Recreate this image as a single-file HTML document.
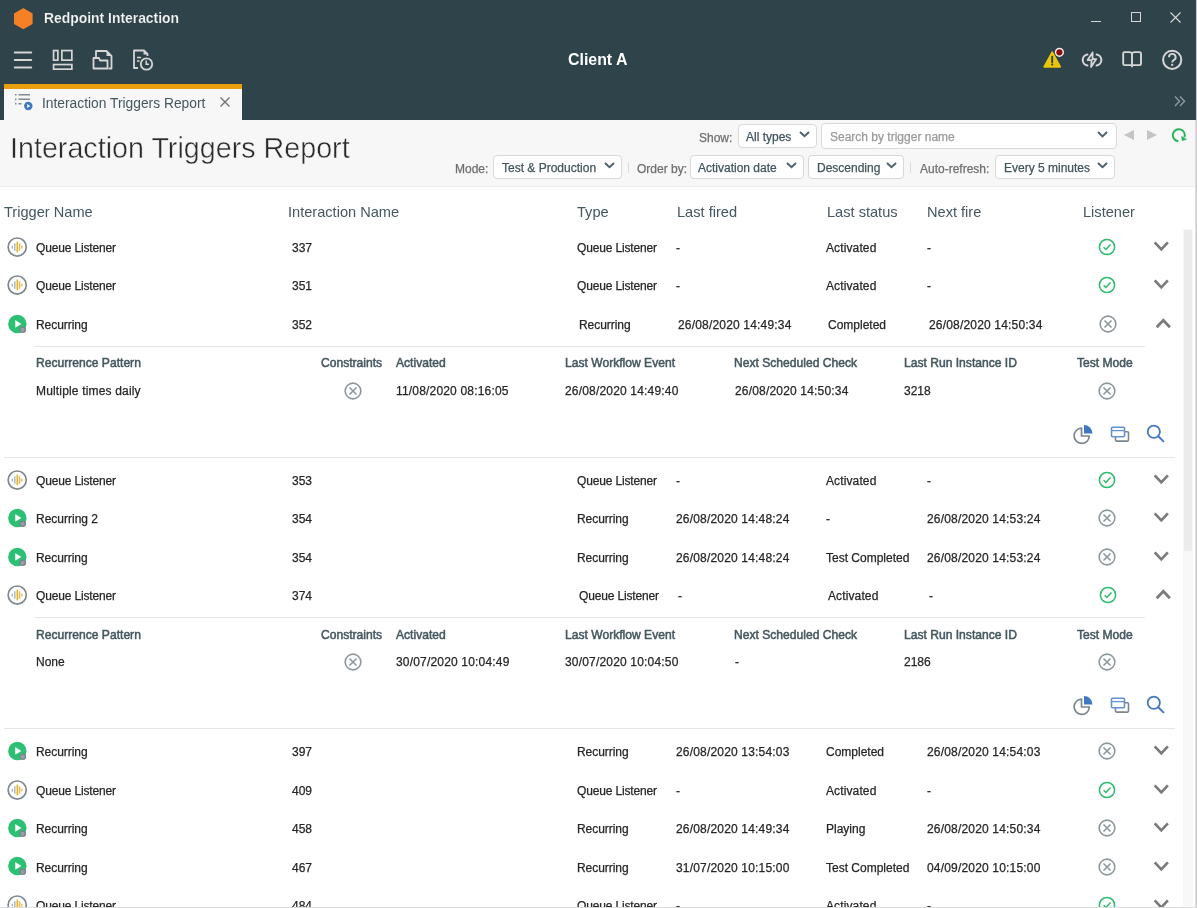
<!DOCTYPE html><html><head><meta charset="utf-8"><style>
html,body{margin:0;padding:0}
body{width:1197px;height:908px;overflow:hidden;position:relative;background:#fff;font-family:'Liberation Sans', sans-serif}
.t{position:absolute;white-space:nowrap;font-family:'Liberation Sans', sans-serif;will-change:transform}
svg{overflow:visible}
</style></head><body>
<div style="position:absolute;left:0px;top:0px;width:1197px;height:120px;background:#2f434b"></div>
<svg style="position:absolute;left:13px;top:7px" width="21" height="23" viewBox="0 0 21 23"><polygon points="10.3,2 18.8,6.85 18.8,16.45 10.3,21.3 1.8,16.45 1.8,6.85" fill="#f58025" stroke="#f58025" stroke-width="1.6" stroke-linejoin="round"/></svg>
<div class="t" style="left:44px;top:12.32px;font-size:13.9px;line-height:13.9px;color:#f5f5f5;font-weight:700;-webkit-text-stroke:0.15px #2f434b;">Redpoint Interaction</div>
<div style="position:absolute;left:1091px;top:21px;width:10px;height:1px;background:#d8d8d8"></div>
<div style="position:absolute;left:1131px;top:12px;width:10px;height:10px;border:1px solid #d8d8d8;box-sizing:border-box"></div>
<svg style="position:absolute;left:1170px;top:12px" width="11" height="11" viewBox="0 0 11 11"><path d="M0.5 0.5L10.5 10.5M10.5 0.5L0.5 10.5" stroke="#d8d8d8" stroke-width="1.1"/></svg>
<svg style="position:absolute;left:13px;top:50px" width="20" height="20" viewBox="0 0 20 20"><path d="M1.8 2.5H18.2M1.8 10H18.2M1.8 17.4H18.2" stroke="#d6d6d6" stroke-width="2" stroke-linecap="round"/></svg>
<svg style="position:absolute;left:52px;top:49px" width="22" height="22" viewBox="0 0 22 22"><rect x="1.55" y="1.55" width="4.3" height="9.6" fill="none" stroke="#d6d6d6" stroke-width="1.7"/><rect x="9.85" y="1.55" width="10" height="9.6" fill="none" stroke="#d6d6d6" stroke-width="1.7"/><rect x="1.55" y="15.55" width="18.3" height="4.6" fill="none" stroke="#d6d6d6" stroke-width="1.7"/></svg>
<svg style="position:absolute;left:92px;top:49px" width="22" height="22" viewBox="0 0 22 22"><path d="M4 8V2H14.5L19.5 7V19.5H16.5" fill="none" stroke="#d6d6d6" stroke-width="1.8" stroke-linejoin="round"/><path d="M14.5 1.5V7H19.5Z" fill="#d6d6d6"/><path d="M1.5 9H7L8 11.5H15.5V19.5H1.5Z" fill="none" stroke="#d6d6d6" stroke-width="1.8" stroke-linejoin="round"/></svg>
<svg style="position:absolute;left:132px;top:49px" width="23" height="23" viewBox="0 0 23 23"><path d="M6 19H2V1.5H12L15.5 5V7" fill="none" stroke="#d6d6d6" stroke-width="1.8" stroke-linejoin="round"/><path d="M11.5 1.5V5.5H15.5Z" fill="#d6d6d6"/><path d="M5 8.5H9M5 12H7.5" stroke="#d6d6d6" stroke-width="1.6"/><circle cx="14.5" cy="15" r="5.7" fill="none" stroke="#d6d6d6" stroke-width="1.8"/><path d="M14.2 11.5V15.3H17" fill="none" stroke="#d6d6d6" stroke-width="1.5"/></svg>
<div class="t" style="left:568px;top:52.14px;font-size:15.9px;line-height:15.9px;color:#ffffff;font-weight:700;">Client A</div>
<svg style="position:absolute;left:1040px;top:44px" width="28" height="28" viewBox="0 0 28 28"><path d="M12.2 8.4L20 22.7H4.4Z" fill="#e8c60a" stroke="#e8c60a" stroke-width="2" stroke-linejoin="round"/><path d="M12.2 12.6V18.2" stroke="#2f434b" stroke-width="1.9" stroke-linecap="round"/><circle cx="12.2" cy="20.6" r="1.05" fill="#2f434b"/><circle cx="19.4" cy="8.3" r="3.85" fill="#8e0a0a" stroke="#f0f0f0" stroke-width="1.5"/></svg>
<svg style="position:absolute;left:1078px;top:46px" width="28" height="26" viewBox="0 0 28 26"><path d="M9.45 8.6A5.5 5.5 0 0 0 9.45 19.5M18.6 8.6A5.5 5.5 0 0 1 18.6 19.5" fill="none" stroke="#d6d6d6" stroke-width="2" stroke-linecap="round"/><path d="M14.6 6.5L9.6 14.1H13.6L13.1 21L18.2 13.1H14.6Z" fill="none" stroke="#d6d6d6" stroke-width="1.8" stroke-linejoin="round"/></svg>
<svg style="position:absolute;left:1118px;top:46px" width="28" height="26" viewBox="0 0 28 26"><path d="M14 7.4Q13.2 6.1 11.5 6.1H6.6Q5.2 6.1 5.2 7.5V17.7Q5.2 19.1 6.6 19.1H21.6Q23 19.1 23 17.7V7.5Q23 6.1 21.6 6.1H16.5Q14.8 6.1 14 7.4V19.1" fill="none" stroke="#d6d6d6" stroke-width="1.9" stroke-linejoin="round"/><path d="M12 19L14 21.7L16 19Z" fill="#d6d6d6"/></svg>
<svg style="position:absolute;left:1158px;top:46px" width="28" height="28" viewBox="0 0 28 28"><circle cx="14.2" cy="13.8" r="9.1" fill="none" stroke="#d6d6d6" stroke-width="2"/><path d="M11 11.2A3.3 3.3 0 1 1 15.6 14.2C14.6 14.8 14.2 15.2 14.2 16.6" fill="none" stroke="#d6d6d6" stroke-width="1.9" stroke-linecap="butt"/><rect x="13.2" y="17.8" width="2" height="2" fill="#d6d6d6"/></svg>
<div style="position:absolute;left:4px;top:84px;width:238px;height:36px;background:#f7f7f7"></div>
<div style="position:absolute;left:4px;top:84px;width:238px;height:5px;background:#e8a10b"></div>
<svg style="position:absolute;left:14px;top:93px" width="18" height="18" viewBox="0 0 18 18"><path d="M1 1.7H2.5M1 6.3H2.5M1 10.8H2.5" stroke="#808a8f" stroke-width="1.6"/><path d="M4.5 1.7H16M4.5 6.3H16M4.5 10.8H7.5" stroke="#808a8f" stroke-width="1.6"/><circle cx="14.3" cy="13" r="4.2" fill="#3e78c0"/><path d="M13.2 11L16.2 13L13.2 15Z" fill="#fff"/></svg>
<div class="t" style="left:42px;top:96.71px;font-size:13.8px;line-height:13.8px;color:#44575f;font-weight:400;">Interaction Triggers Report</div>
<svg style="position:absolute;left:220px;top:97px" width="10" height="10" viewBox="0 0 10 10"><path d="M0.5 0.5L9.5 9.5M9.5 0.5L0.5 9.5" stroke="#707070" stroke-width="1.3"/></svg>
<svg style="position:absolute;left:1174px;top:96px" width="12" height="11" viewBox="0 0 12 11"><path d="M1 0.5L5.5 5.3L1 10M6 0.5L10.5 5.3L6 10" fill="none" stroke="#8e9aa0" stroke-width="1.4"/></svg>
<div style="position:absolute;left:0px;top:120px;width:1197px;height:66px;background:#f7f7f7"></div>
<div style="position:absolute;left:0px;top:186px;width:1197px;height:1px;background:#efefef"></div>
<div class="t" style="left:10px;top:133.89px;font-size:28.7px;line-height:28.7px;color:#2b2b2b;font-weight:400;-webkit-text-stroke:0.45px #f7f7f7;">Interaction Triggers Report</div>
<div class="t" style="left:698.5px;top:131.52px;font-size:12px;line-height:12px;color:#6e6e6e;font-weight:400;-webkit-text-stroke:0.25px #6e6e6e;">Show:</div>
<div style="position:absolute;left:738px;top:124px;width:79px;height:24px;background:#fff;border:1px solid #d9d9d9;border-radius:4px;box-sizing:border-box"></div>
<div class="t" style="left:746px;top:131.02px;font-size:12px;line-height:12px;color:#41545d;font-weight:400;-webkit-text-stroke:0.25px #41545d;">All types</div>
<svg style="position:absolute;left:799px;top:131.2px" width="11" height="7" viewBox="0 0 11 7"><path d="M1 1L5.5 5.2L10 1" fill="none" stroke="#4f626b" stroke-width="2"/></svg>
<div style="position:absolute;left:821px;top:123px;width:296px;height:26px;background:#fff;border:1px solid #d9d9d9;border-radius:4px;box-sizing:border-box"></div>
<div class="t" style="left:829.5px;top:131.32px;font-size:12px;line-height:12px;color:#9a9a9a;font-weight:400;-webkit-text-stroke:0.25px #9a9a9a;">Search by trigger name</div>
<svg style="position:absolute;left:1097px;top:131px" width="11" height="7" viewBox="0 0 11 7"><path d="M1 1L5.5 5.5L10 1" fill="none" stroke="#4f626b" stroke-width="1.9"/></svg>
<svg style="position:absolute;left:1124px;top:130px" width="10" height="10" viewBox="0 0 10 10"><path d="M10 0V10L0 5Z" fill="#c4c4c4"/></svg>
<svg style="position:absolute;left:1146.5px;top:130px" width="10" height="10" viewBox="0 0 10 10"><path d="M0 0V10L10 5Z" fill="#c4c4c4"/></svg>
<svg style="position:absolute;left:1171px;top:128px" width="16" height="15" viewBox="0 0 16 15"><path d="M7.28 13.18A6 6 0 1 1 13.44 9.25" fill="none" stroke="#22b35e" stroke-width="1.9"/><path d="M10.6 8.4L11.2 12.6L15.4 11.4Z" fill="#22b35e" stroke="#22b35e" stroke-width="0.6" stroke-linejoin="round"/></svg>
<div class="t" style="left:454.5px;top:163.02px;font-size:12px;line-height:12px;color:#6e6e6e;font-weight:400;-webkit-text-stroke:0.25px #6e6e6e;">Mode:</div>
<div style="position:absolute;left:493px;top:155px;width:129px;height:24px;background:#fff;border:1px solid #d9d9d9;border-radius:4px;box-sizing:border-box"></div>
<div class="t" style="left:501.5px;top:162.02px;font-size:12px;line-height:12px;color:#41545d;font-weight:400;-webkit-text-stroke:0.25px #41545d;">Test &amp; Production</div>
<svg style="position:absolute;left:604px;top:162.2px" width="11" height="7" viewBox="0 0 11 7"><path d="M1 1L5.5 5.2L10 1" fill="none" stroke="#4f626b" stroke-width="2"/></svg>
<div style="position:absolute;left:628px;top:162px;width:1px;height:11px;background:#dcdcdc"></div>
<div class="t" style="left:637px;top:163.02px;font-size:12px;line-height:12px;color:#6e6e6e;font-weight:400;-webkit-text-stroke:0.25px #6e6e6e;">Order by:</div>
<div style="position:absolute;left:690px;top:155px;width:114px;height:24px;background:#fff;border:1px solid #d9d9d9;border-radius:4px;box-sizing:border-box"></div>
<div class="t" style="left:698px;top:162.02px;font-size:12px;line-height:12px;color:#41545d;font-weight:400;-webkit-text-stroke:0.25px #41545d;">Activation date</div>
<svg style="position:absolute;left:786px;top:162.2px" width="11" height="7" viewBox="0 0 11 7"><path d="M1 1L5.5 5.2L10 1" fill="none" stroke="#4f626b" stroke-width="2"/></svg>
<div style="position:absolute;left:808px;top:155px;width:96px;height:24px;background:#fff;border:1px solid #d9d9d9;border-radius:4px;box-sizing:border-box"></div>
<div class="t" style="left:816.5px;top:162.02px;font-size:12px;line-height:12px;color:#41545d;font-weight:400;-webkit-text-stroke:0.25px #41545d;">Descending</div>
<svg style="position:absolute;left:886px;top:162.2px" width="11" height="7" viewBox="0 0 11 7"><path d="M1 1L5.5 5.2L10 1" fill="none" stroke="#4f626b" stroke-width="2"/></svg>
<div style="position:absolute;left:910px;top:162px;width:1px;height:11px;background:#dcdcdc"></div>
<div class="t" style="left:919.5px;top:163.02px;font-size:12px;line-height:12px;color:#6e6e6e;font-weight:400;-webkit-text-stroke:0.25px #6e6e6e;">Auto-refresh:</div>
<div style="position:absolute;left:995px;top:155px;width:120px;height:24px;background:#fff;border:1px solid #d9d9d9;border-radius:4px;box-sizing:border-box"></div>
<div class="t" style="left:1003.5px;top:162.02px;font-size:12px;line-height:12px;color:#41545d;font-weight:400;-webkit-text-stroke:0.25px #41545d;">Every 5 minutes</div>
<svg style="position:absolute;left:1097px;top:162.2px" width="11" height="7" viewBox="0 0 11 7"><path d="M1 1L5.5 5.2L10 1" fill="none" stroke="#4f626b" stroke-width="2"/></svg>
<div class="t" style="left:3.8px;top:204.74px;font-size:14.6px;line-height:14.6px;color:#44575f;font-weight:400;">Trigger Name</div>
<div class="t" style="left:288.3px;top:204.74px;font-size:14.6px;line-height:14.6px;color:#44575f;font-weight:400;">Interaction Name</div>
<div class="t" style="left:577px;top:204.74px;font-size:14.6px;line-height:14.6px;color:#44575f;font-weight:400;">Type</div>
<div class="t" style="left:676.5px;top:204.74px;font-size:14.6px;line-height:14.6px;color:#44575f;font-weight:400;">Last fired</div>
<div class="t" style="left:827px;top:204.74px;font-size:14.6px;line-height:14.6px;color:#44575f;font-weight:400;">Last status</div>
<div class="t" style="left:927px;top:204.74px;font-size:14.6px;line-height:14.6px;color:#44575f;font-weight:400;">Next fire</div>
<div class="t" style="left:1082.5px;top:204.74px;font-size:14.6px;line-height:14.6px;color:#44575f;font-weight:400;">Listener</div>
<svg style="position:absolute;left:7px;top:237px" width="20" height="20" viewBox="0 0 20 20"><circle cx="10.2" cy="10.05" r="9.05" fill="#fff" stroke="#7d8890" stroke-width="1.7"/><path d="M5.3 8.7V11.5M7.8 6.3V13.7" stroke="#aab3b9" stroke-width="1.4"/><path d="M10.3 4.6V15.4" stroke="#eab12e" stroke-width="1.6"/><path d="M12.6 6.3V13.8" stroke="#edbb4e" stroke-width="1.5"/><path d="M14.8 8.7V11.5" stroke="#f0c66a" stroke-width="1.8"/></svg>
<div class="t" style="left:36px;top:241.92px;font-size:12px;line-height:12px;color:#262626;font-weight:400;letter-spacing:-0.15px;-webkit-text-stroke:0.25px #262626;">Queue Listener</div>
<div class="t" style="left:291.5px;top:241.92px;font-size:12px;line-height:12px;color:#262626;font-weight:400;-webkit-text-stroke:0.25px #262626;">337</div>
<div class="t" style="left:576.5px;top:241.92px;font-size:12px;line-height:12px;color:#262626;font-weight:400;letter-spacing:-0.15px;-webkit-text-stroke:0.25px #262626;">Queue Listener</div>
<div class="t" style="left:675.5px;top:241.92px;font-size:12px;line-height:12px;color:#262626;font-weight:400;-webkit-text-stroke:0.25px #262626;">-</div>
<div class="t" style="left:826px;top:241.92px;font-size:12px;line-height:12px;color:#262626;font-weight:400;letter-spacing:0.12px;-webkit-text-stroke:0.25px #262626;">Activated</div>
<div class="t" style="left:927px;top:241.92px;font-size:12px;line-height:12px;color:#262626;font-weight:400;-webkit-text-stroke:0.25px #262626;">-</div>
<svg style="position:absolute;left:1098.0px;top:238px" width="18" height="18" viewBox="0 0 18 18"><circle cx="9" cy="9" r="7.6" fill="none" stroke="#2dbb6e" stroke-width="1.5"/><path d="M5.6 9.3L7.9 11.5L12.5 6.5" fill="none" stroke="#2dbb6e" stroke-width="1.5"/></svg>
<svg style="position:absolute;left:1152.6px;top:241px" width="17" height="11" viewBox="0 0 17 11"><path d="M1.7 1.4L8.3 8.4L14.9 1.4" fill="none" stroke="#7a7a7a" stroke-width="2.7"/></svg>
<svg style="position:absolute;left:7px;top:275.45px" width="20" height="20" viewBox="0 0 20 20"><circle cx="10.2" cy="10.05" r="9.05" fill="#fff" stroke="#7d8890" stroke-width="1.7"/><path d="M5.3 8.7V11.5M7.8 6.3V13.7" stroke="#aab3b9" stroke-width="1.4"/><path d="M10.3 4.6V15.4" stroke="#eab12e" stroke-width="1.6"/><path d="M12.6 6.3V13.8" stroke="#edbb4e" stroke-width="1.5"/><path d="M14.8 8.7V11.5" stroke="#f0c66a" stroke-width="1.8"/></svg>
<div class="t" style="left:36px;top:280.37px;font-size:12px;line-height:12px;color:#262626;font-weight:400;letter-spacing:-0.15px;-webkit-text-stroke:0.25px #262626;">Queue Listener</div>
<div class="t" style="left:291.5px;top:280.37px;font-size:12px;line-height:12px;color:#262626;font-weight:400;-webkit-text-stroke:0.25px #262626;">351</div>
<div class="t" style="left:576.5px;top:280.37px;font-size:12px;line-height:12px;color:#262626;font-weight:400;letter-spacing:-0.15px;-webkit-text-stroke:0.25px #262626;">Queue Listener</div>
<div class="t" style="left:675.5px;top:280.37px;font-size:12px;line-height:12px;color:#262626;font-weight:400;-webkit-text-stroke:0.25px #262626;">-</div>
<div class="t" style="left:826px;top:280.37px;font-size:12px;line-height:12px;color:#262626;font-weight:400;letter-spacing:0.12px;-webkit-text-stroke:0.25px #262626;">Activated</div>
<div class="t" style="left:927px;top:280.37px;font-size:12px;line-height:12px;color:#262626;font-weight:400;-webkit-text-stroke:0.25px #262626;">-</div>
<svg style="position:absolute;left:1098.0px;top:276.45px" width="18" height="18" viewBox="0 0 18 18"><circle cx="9" cy="9" r="7.6" fill="none" stroke="#2dbb6e" stroke-width="1.5"/><path d="M5.6 9.3L7.9 11.5L12.5 6.5" fill="none" stroke="#2dbb6e" stroke-width="1.5"/></svg>
<svg style="position:absolute;left:1152.6px;top:279.45px" width="17" height="11" viewBox="0 0 17 11"><path d="M1.7 1.4L8.3 8.4L14.9 1.4" fill="none" stroke="#7a7a7a" stroke-width="2.7"/></svg>
<svg style="position:absolute;left:7px;top:313.65px" width="20" height="22" viewBox="0 0 20 22"><circle cx="10.35" cy="10" r="9.2" fill="#2dbf73"/><path d="M8.5 6.6L14 9.9L8.5 13.2Z" fill="#fff" stroke="#fff" stroke-width="0.5" stroke-linejoin="round"/><circle cx="15.8" cy="15.8" r="3.3" fill="#7b848c"/><circle cx="15.8" cy="15.8" r="1.8" fill="#a3abb1"/><path d="M15.8 14.7V15.9H16.8" fill="none" stroke="#7b848c" stroke-width="0.6"/></svg>
<div class="t" style="left:36px;top:318.82px;font-size:12px;line-height:12px;color:#262626;font-weight:400;letter-spacing:-0.05px;-webkit-text-stroke:0.25px #262626;">Recurring</div>
<div class="t" style="left:291.5px;top:318.82px;font-size:12px;line-height:12px;color:#262626;font-weight:400;-webkit-text-stroke:0.25px #262626;">352</div>
<div class="t" style="left:578.5px;top:318.82px;font-size:12px;line-height:12px;color:#262626;font-weight:400;letter-spacing:-0.05px;-webkit-text-stroke:0.25px #262626;">Recurring</div>
<div class="t" style="left:677.5px;top:318.82px;font-size:12px;line-height:12px;color:#262626;font-weight:400;letter-spacing:0.18px;-webkit-text-stroke:0.25px #262626;">26/08/2020 14:49:34</div>
<div class="t" style="left:828px;top:318.82px;font-size:12px;line-height:12px;color:#262626;font-weight:400;-webkit-text-stroke:0.25px #262626;">Completed</div>
<div class="t" style="left:929px;top:318.82px;font-size:12px;line-height:12px;color:#262626;font-weight:400;letter-spacing:0.18px;-webkit-text-stroke:0.25px #262626;">26/08/2020 14:50:34</div>
<svg style="position:absolute;left:1099.2px;top:314.9px" width="18" height="18" viewBox="0 0 18 18"><circle cx="9" cy="9" r="7.85" fill="none" stroke="#8d989e" stroke-width="1.6"/><path d="M5.5 5.5L12.5 12.5M12.5 5.5L5.5 12.5" stroke="#8d989e" stroke-width="1.6"/></svg>
<svg style="position:absolute;left:1154.6px;top:317.9px" width="17" height="11" viewBox="0 0 17 11"><path d="M1.7 9.2L8.3 2.2L14.9 9.2" fill="none" stroke="#7a7a7a" stroke-width="2.7"/></svg>
<div style="position:absolute;left:35px;top:345.9px;width:1110px;height:1px;background:#e6e6e6"></div>
<div class="t" style="left:36px;top:357.44px;font-size:12.1px;line-height:12.1px;color:#44575f;font-weight:400;-webkit-text-stroke:0.5px #44575f">Recurrence Pattern</div>
<div class="t" style="left:321px;top:357.44px;font-size:12.1px;line-height:12.1px;color:#44575f;font-weight:400;-webkit-text-stroke:0.5px #44575f">Constraints</div>
<div class="t" style="left:395.5px;top:357.44px;font-size:12.1px;line-height:12.1px;color:#44575f;font-weight:400;-webkit-text-stroke:0.5px #44575f">Activated</div>
<div class="t" style="left:565px;top:357.44px;font-size:12.1px;line-height:12.1px;color:#44575f;font-weight:400;-webkit-text-stroke:0.5px #44575f">Last Workflow Event</div>
<div class="t" style="left:734px;top:357.44px;font-size:12.1px;line-height:12.1px;color:#44575f;font-weight:400;-webkit-text-stroke:0.5px #44575f">Next Scheduled Check</div>
<div class="t" style="left:904px;top:357.44px;font-size:12.1px;line-height:12.1px;color:#44575f;font-weight:400;-webkit-text-stroke:0.5px #44575f">Last Run Instance ID</div>
<div class="t" style="left:1076.5px;top:357.44px;font-size:12.1px;line-height:12.1px;color:#44575f;font-weight:400;-webkit-text-stroke:0.5px #44575f">Test Mode</div>
<div class="t" style="left:36px;top:385.02px;font-size:12px;line-height:12px;color:#262626;font-weight:400;letter-spacing:0.17px;-webkit-text-stroke:0.25px #262626;">Multiple times daily</div>
<svg style="position:absolute;left:343.5px;top:381.59999999999997px" width="18" height="18" viewBox="0 0 18 18"><circle cx="9" cy="9" r="7.85" fill="none" stroke="#8d989e" stroke-width="1.6"/><path d="M5.5 5.5L12.5 12.5M12.5 5.5L5.5 12.5" stroke="#8d989e" stroke-width="1.6"/></svg>
<div class="t" style="left:395.5px;top:385.02px;font-size:12px;line-height:12px;color:#262626;font-weight:400;letter-spacing:0.18px;-webkit-text-stroke:0.25px #262626;">11/08/2020 08:16:05</div>
<div class="t" style="left:565px;top:385.02px;font-size:12px;line-height:12px;color:#262626;font-weight:400;letter-spacing:0.18px;-webkit-text-stroke:0.25px #262626;">26/08/2020 14:49:40</div>
<div class="t" style="left:734.5px;top:385.02px;font-size:12px;line-height:12px;color:#262626;font-weight:400;letter-spacing:0.18px;-webkit-text-stroke:0.25px #262626;">26/08/2020 14:50:34</div>
<div class="t" style="left:904px;top:385.02px;font-size:12px;line-height:12px;color:#262626;font-weight:400;-webkit-text-stroke:0.25px #262626;">3218</div>
<svg style="position:absolute;left:1097.5px;top:381.59999999999997px" width="18" height="18" viewBox="0 0 18 18"><circle cx="9" cy="9" r="7.85" fill="none" stroke="#8d989e" stroke-width="1.6"/><path d="M5.5 5.5L12.5 12.5M12.5 5.5L5.5 12.5" stroke="#8d989e" stroke-width="1.6"/></svg>
<svg style="position:absolute;left:1073px;top:424.09999999999997px" width="21" height="20" viewBox="0 0 21 20"><path d="M8.5 4.2A7.6 7.6 0 1 0 16.3 12H8.5Z" fill="none" stroke="#7b878e" stroke-width="1.7" stroke-linejoin="round"/><path d="M11 1V9.5H19.5A8.5 8.5 0 0 0 11 1Z" fill="#3f79c1"/></svg>
<svg style="position:absolute;left:1110px;top:425.09999999999997px" width="21" height="18" viewBox="0 0 21 18"><rect x="5.5" y="6.8" width="13" height="9.3" rx="1" fill="none" stroke="#7b878e" stroke-width="1.6"/><rect x="1.5" y="2.3" width="13" height="9.5" rx="1" fill="#fff" stroke="#6593ce" stroke-width="1.6"/><path d="M1.5 5.6H14.5" stroke="#6593ce" stroke-width="1.3"/></svg>
<svg style="position:absolute;left:1146px;top:424.09999999999997px" width="20" height="20" viewBox="0 0 20 20"><circle cx="7.8" cy="7.8" r="6.1" fill="none" stroke="#4479bf" stroke-width="1.8"/><path d="M12.3 12.3L17.4 17.4" stroke="#4479bf" stroke-width="2" stroke-linecap="round"/></svg>
<div style="position:absolute;left:4px;top:456.9px;width:1171px;height:1px;background:#e6e6e6"></div>
<svg style="position:absolute;left:7px;top:469.9px" width="20" height="20" viewBox="0 0 20 20"><circle cx="10.2" cy="10.05" r="9.05" fill="#fff" stroke="#7d8890" stroke-width="1.7"/><path d="M5.3 8.7V11.5M7.8 6.3V13.7" stroke="#aab3b9" stroke-width="1.4"/><path d="M10.3 4.6V15.4" stroke="#eab12e" stroke-width="1.6"/><path d="M12.6 6.3V13.8" stroke="#edbb4e" stroke-width="1.5"/><path d="M14.8 8.7V11.5" stroke="#f0c66a" stroke-width="1.8"/></svg>
<div class="t" style="left:36px;top:474.82px;font-size:12px;line-height:12px;color:#262626;font-weight:400;letter-spacing:-0.15px;-webkit-text-stroke:0.25px #262626;">Queue Listener</div>
<div class="t" style="left:291.5px;top:474.82px;font-size:12px;line-height:12px;color:#262626;font-weight:400;-webkit-text-stroke:0.25px #262626;">353</div>
<div class="t" style="left:576.5px;top:474.82px;font-size:12px;line-height:12px;color:#262626;font-weight:400;letter-spacing:-0.15px;-webkit-text-stroke:0.25px #262626;">Queue Listener</div>
<div class="t" style="left:675.5px;top:474.82px;font-size:12px;line-height:12px;color:#262626;font-weight:400;-webkit-text-stroke:0.25px #262626;">-</div>
<div class="t" style="left:826px;top:474.82px;font-size:12px;line-height:12px;color:#262626;font-weight:400;letter-spacing:0.12px;-webkit-text-stroke:0.25px #262626;">Activated</div>
<div class="t" style="left:927px;top:474.82px;font-size:12px;line-height:12px;color:#262626;font-weight:400;-webkit-text-stroke:0.25px #262626;">-</div>
<svg style="position:absolute;left:1098.0px;top:470.9px" width="18" height="18" viewBox="0 0 18 18"><circle cx="9" cy="9" r="7.6" fill="none" stroke="#2dbb6e" stroke-width="1.5"/><path d="M5.6 9.3L7.9 11.5L12.5 6.5" fill="none" stroke="#2dbb6e" stroke-width="1.5"/></svg>
<svg style="position:absolute;left:1152.6px;top:473.9px" width="17" height="11" viewBox="0 0 17 11"><path d="M1.7 1.4L8.3 8.4L14.9 1.4" fill="none" stroke="#7a7a7a" stroke-width="2.7"/></svg>
<svg style="position:absolute;left:7px;top:508.1px" width="20" height="22" viewBox="0 0 20 22"><circle cx="10.35" cy="10" r="9.2" fill="#2dbf73"/><path d="M8.5 6.6L14 9.9L8.5 13.2Z" fill="#fff" stroke="#fff" stroke-width="0.5" stroke-linejoin="round"/><circle cx="15.8" cy="15.8" r="3.3" fill="#7b848c"/><circle cx="15.8" cy="15.8" r="1.8" fill="#a3abb1"/><path d="M15.8 14.7V15.9H16.8" fill="none" stroke="#7b848c" stroke-width="0.6"/></svg>
<div class="t" style="left:36px;top:513.27px;font-size:12px;line-height:12px;color:#262626;font-weight:400;-webkit-text-stroke:0.25px #262626;">Recurring 2</div>
<div class="t" style="left:291.5px;top:513.27px;font-size:12px;line-height:12px;color:#262626;font-weight:400;-webkit-text-stroke:0.25px #262626;">354</div>
<div class="t" style="left:576.5px;top:513.27px;font-size:12px;line-height:12px;color:#262626;font-weight:400;letter-spacing:-0.05px;-webkit-text-stroke:0.25px #262626;">Recurring</div>
<div class="t" style="left:675.5px;top:513.27px;font-size:12px;line-height:12px;color:#262626;font-weight:400;letter-spacing:0.18px;-webkit-text-stroke:0.25px #262626;">26/08/2020 14:48:24</div>
<div class="t" style="left:826px;top:513.27px;font-size:12px;line-height:12px;color:#262626;font-weight:400;-webkit-text-stroke:0.25px #262626;">-</div>
<div class="t" style="left:927px;top:513.27px;font-size:12px;line-height:12px;color:#262626;font-weight:400;letter-spacing:0.18px;-webkit-text-stroke:0.25px #262626;">26/08/2020 14:53:24</div>
<svg style="position:absolute;left:1098.2px;top:509.35px" width="18" height="18" viewBox="0 0 18 18"><circle cx="9" cy="9" r="7.85" fill="none" stroke="#8d989e" stroke-width="1.6"/><path d="M5.5 5.5L12.5 12.5M12.5 5.5L5.5 12.5" stroke="#8d989e" stroke-width="1.6"/></svg>
<svg style="position:absolute;left:1152.6px;top:512.35px" width="17" height="11" viewBox="0 0 17 11"><path d="M1.7 1.4L8.3 8.4L14.9 1.4" fill="none" stroke="#7a7a7a" stroke-width="2.7"/></svg>
<svg style="position:absolute;left:7px;top:546.5500000000001px" width="20" height="22" viewBox="0 0 20 22"><circle cx="10.35" cy="10" r="9.2" fill="#2dbf73"/><path d="M8.5 6.6L14 9.9L8.5 13.2Z" fill="#fff" stroke="#fff" stroke-width="0.5" stroke-linejoin="round"/><circle cx="15.8" cy="15.8" r="3.3" fill="#7b848c"/><circle cx="15.8" cy="15.8" r="1.8" fill="#a3abb1"/><path d="M15.8 14.7V15.9H16.8" fill="none" stroke="#7b848c" stroke-width="0.6"/></svg>
<div class="t" style="left:36px;top:551.72px;font-size:12px;line-height:12px;color:#262626;font-weight:400;letter-spacing:-0.05px;-webkit-text-stroke:0.25px #262626;">Recurring</div>
<div class="t" style="left:291.5px;top:551.72px;font-size:12px;line-height:12px;color:#262626;font-weight:400;-webkit-text-stroke:0.25px #262626;">354</div>
<div class="t" style="left:576.5px;top:551.72px;font-size:12px;line-height:12px;color:#262626;font-weight:400;letter-spacing:-0.05px;-webkit-text-stroke:0.25px #262626;">Recurring</div>
<div class="t" style="left:675.5px;top:551.72px;font-size:12px;line-height:12px;color:#262626;font-weight:400;letter-spacing:0.18px;-webkit-text-stroke:0.25px #262626;">26/08/2020 14:48:24</div>
<div class="t" style="left:826px;top:551.72px;font-size:12px;line-height:12px;color:#262626;font-weight:400;-webkit-text-stroke:0.25px #262626;">Test Completed</div>
<div class="t" style="left:927px;top:551.72px;font-size:12px;line-height:12px;color:#262626;font-weight:400;letter-spacing:0.18px;-webkit-text-stroke:0.25px #262626;">26/08/2020 14:53:24</div>
<svg style="position:absolute;left:1098.2px;top:547.8000000000001px" width="18" height="18" viewBox="0 0 18 18"><circle cx="9" cy="9" r="7.85" fill="none" stroke="#8d989e" stroke-width="1.6"/><path d="M5.5 5.5L12.5 12.5M12.5 5.5L5.5 12.5" stroke="#8d989e" stroke-width="1.6"/></svg>
<svg style="position:absolute;left:1152.6px;top:550.8000000000001px" width="17" height="11" viewBox="0 0 17 11"><path d="M1.7 1.4L8.3 8.4L14.9 1.4" fill="none" stroke="#7a7a7a" stroke-width="2.7"/></svg>
<svg style="position:absolute;left:7px;top:585.2500000000001px" width="20" height="20" viewBox="0 0 20 20"><circle cx="10.2" cy="10.05" r="9.05" fill="#fff" stroke="#7d8890" stroke-width="1.7"/><path d="M5.3 8.7V11.5M7.8 6.3V13.7" stroke="#aab3b9" stroke-width="1.4"/><path d="M10.3 4.6V15.4" stroke="#eab12e" stroke-width="1.6"/><path d="M12.6 6.3V13.8" stroke="#edbb4e" stroke-width="1.5"/><path d="M14.8 8.7V11.5" stroke="#f0c66a" stroke-width="1.8"/></svg>
<div class="t" style="left:36px;top:590.17px;font-size:12px;line-height:12px;color:#262626;font-weight:400;letter-spacing:-0.15px;-webkit-text-stroke:0.25px #262626;">Queue Listener</div>
<div class="t" style="left:291.5px;top:590.17px;font-size:12px;line-height:12px;color:#262626;font-weight:400;-webkit-text-stroke:0.25px #262626;">374</div>
<div class="t" style="left:578.5px;top:590.17px;font-size:12px;line-height:12px;color:#262626;font-weight:400;letter-spacing:-0.15px;-webkit-text-stroke:0.25px #262626;">Queue Listener</div>
<div class="t" style="left:677.5px;top:590.17px;font-size:12px;line-height:12px;color:#262626;font-weight:400;-webkit-text-stroke:0.25px #262626;">-</div>
<div class="t" style="left:828px;top:590.17px;font-size:12px;line-height:12px;color:#262626;font-weight:400;letter-spacing:0.12px;-webkit-text-stroke:0.25px #262626;">Activated</div>
<div class="t" style="left:929px;top:590.17px;font-size:12px;line-height:12px;color:#262626;font-weight:400;-webkit-text-stroke:0.25px #262626;">-</div>
<svg style="position:absolute;left:1099.0px;top:586.2500000000001px" width="18" height="18" viewBox="0 0 18 18"><circle cx="9" cy="9" r="7.6" fill="none" stroke="#2dbb6e" stroke-width="1.5"/><path d="M5.6 9.3L7.9 11.5L12.5 6.5" fill="none" stroke="#2dbb6e" stroke-width="1.5"/></svg>
<svg style="position:absolute;left:1154.6px;top:589.2500000000001px" width="17" height="11" viewBox="0 0 17 11"><path d="M1.7 9.2L8.3 2.2L14.9 9.2" fill="none" stroke="#7a7a7a" stroke-width="2.7"/></svg>
<div style="position:absolute;left:35px;top:617.2500000000001px;width:1110px;height:1px;background:#e6e6e6"></div>
<div class="t" style="left:36px;top:628.79px;font-size:12.1px;line-height:12.1px;color:#44575f;font-weight:400;-webkit-text-stroke:0.5px #44575f">Recurrence Pattern</div>
<div class="t" style="left:321px;top:628.79px;font-size:12.1px;line-height:12.1px;color:#44575f;font-weight:400;-webkit-text-stroke:0.5px #44575f">Constraints</div>
<div class="t" style="left:395.5px;top:628.79px;font-size:12.1px;line-height:12.1px;color:#44575f;font-weight:400;-webkit-text-stroke:0.5px #44575f">Activated</div>
<div class="t" style="left:565px;top:628.79px;font-size:12.1px;line-height:12.1px;color:#44575f;font-weight:400;-webkit-text-stroke:0.5px #44575f">Last Workflow Event</div>
<div class="t" style="left:734px;top:628.79px;font-size:12.1px;line-height:12.1px;color:#44575f;font-weight:400;-webkit-text-stroke:0.5px #44575f">Next Scheduled Check</div>
<div class="t" style="left:904px;top:628.79px;font-size:12.1px;line-height:12.1px;color:#44575f;font-weight:400;-webkit-text-stroke:0.5px #44575f">Last Run Instance ID</div>
<div class="t" style="left:1076.5px;top:628.79px;font-size:12.1px;line-height:12.1px;color:#44575f;font-weight:400;-webkit-text-stroke:0.5px #44575f">Test Mode</div>
<div class="t" style="left:36px;top:656.37px;font-size:12px;line-height:12px;color:#262626;font-weight:400;-webkit-text-stroke:0.25px #262626;">None</div>
<svg style="position:absolute;left:343.5px;top:652.9500000000002px" width="18" height="18" viewBox="0 0 18 18"><circle cx="9" cy="9" r="7.85" fill="none" stroke="#8d989e" stroke-width="1.6"/><path d="M5.5 5.5L12.5 12.5M12.5 5.5L5.5 12.5" stroke="#8d989e" stroke-width="1.6"/></svg>
<div class="t" style="left:395.5px;top:656.37px;font-size:12px;line-height:12px;color:#262626;font-weight:400;letter-spacing:0.18px;-webkit-text-stroke:0.25px #262626;">30/07/2020 10:04:49</div>
<div class="t" style="left:565px;top:656.37px;font-size:12px;line-height:12px;color:#262626;font-weight:400;letter-spacing:0.18px;-webkit-text-stroke:0.25px #262626;">30/07/2020 10:04:50</div>
<div class="t" style="left:734.5px;top:656.37px;font-size:12px;line-height:12px;color:#262626;font-weight:400;-webkit-text-stroke:0.25px #262626;">-</div>
<div class="t" style="left:904px;top:656.37px;font-size:12px;line-height:12px;color:#262626;font-weight:400;-webkit-text-stroke:0.25px #262626;">2186</div>
<svg style="position:absolute;left:1097.5px;top:652.9500000000002px" width="18" height="18" viewBox="0 0 18 18"><circle cx="9" cy="9" r="7.85" fill="none" stroke="#8d989e" stroke-width="1.6"/><path d="M5.5 5.5L12.5 12.5M12.5 5.5L5.5 12.5" stroke="#8d989e" stroke-width="1.6"/></svg>
<svg style="position:absolute;left:1073px;top:695.4500000000002px" width="21" height="20" viewBox="0 0 21 20"><path d="M8.5 4.2A7.6 7.6 0 1 0 16.3 12H8.5Z" fill="none" stroke="#7b878e" stroke-width="1.7" stroke-linejoin="round"/><path d="M11 1V9.5H19.5A8.5 8.5 0 0 0 11 1Z" fill="#3f79c1"/></svg>
<svg style="position:absolute;left:1110px;top:696.4500000000002px" width="21" height="18" viewBox="0 0 21 18"><rect x="5.5" y="6.8" width="13" height="9.3" rx="1" fill="none" stroke="#7b878e" stroke-width="1.6"/><rect x="1.5" y="2.3" width="13" height="9.5" rx="1" fill="#fff" stroke="#6593ce" stroke-width="1.6"/><path d="M1.5 5.6H14.5" stroke="#6593ce" stroke-width="1.3"/></svg>
<svg style="position:absolute;left:1146px;top:695.4500000000002px" width="20" height="20" viewBox="0 0 20 20"><circle cx="7.8" cy="7.8" r="6.1" fill="none" stroke="#4479bf" stroke-width="1.8"/><path d="M12.3 12.3L17.4 17.4" stroke="#4479bf" stroke-width="2" stroke-linecap="round"/></svg>
<div style="position:absolute;left:4px;top:728.2500000000001px;width:1171px;height:1px;background:#e6e6e6"></div>
<svg style="position:absolute;left:7px;top:741.0000000000001px" width="20" height="22" viewBox="0 0 20 22"><circle cx="10.35" cy="10" r="9.2" fill="#2dbf73"/><path d="M8.5 6.6L14 9.9L8.5 13.2Z" fill="#fff" stroke="#fff" stroke-width="0.5" stroke-linejoin="round"/><circle cx="15.8" cy="15.8" r="3.3" fill="#7b848c"/><circle cx="15.8" cy="15.8" r="1.8" fill="#a3abb1"/><path d="M15.8 14.7V15.9H16.8" fill="none" stroke="#7b848c" stroke-width="0.6"/></svg>
<div class="t" style="left:36px;top:746.17px;font-size:12px;line-height:12px;color:#262626;font-weight:400;letter-spacing:-0.05px;-webkit-text-stroke:0.25px #262626;">Recurring</div>
<div class="t" style="left:291.5px;top:746.17px;font-size:12px;line-height:12px;color:#262626;font-weight:400;-webkit-text-stroke:0.25px #262626;">397</div>
<div class="t" style="left:576.5px;top:746.17px;font-size:12px;line-height:12px;color:#262626;font-weight:400;letter-spacing:-0.05px;-webkit-text-stroke:0.25px #262626;">Recurring</div>
<div class="t" style="left:675.5px;top:746.17px;font-size:12px;line-height:12px;color:#262626;font-weight:400;letter-spacing:0.18px;-webkit-text-stroke:0.25px #262626;">26/08/2020 13:54:03</div>
<div class="t" style="left:826px;top:746.17px;font-size:12px;line-height:12px;color:#262626;font-weight:400;-webkit-text-stroke:0.25px #262626;">Completed</div>
<div class="t" style="left:927px;top:746.17px;font-size:12px;line-height:12px;color:#262626;font-weight:400;letter-spacing:0.18px;-webkit-text-stroke:0.25px #262626;">26/08/2020 14:54:03</div>
<svg style="position:absolute;left:1098.2px;top:742.2500000000001px" width="18" height="18" viewBox="0 0 18 18"><circle cx="9" cy="9" r="7.85" fill="none" stroke="#8d989e" stroke-width="1.6"/><path d="M5.5 5.5L12.5 12.5M12.5 5.5L5.5 12.5" stroke="#8d989e" stroke-width="1.6"/></svg>
<svg style="position:absolute;left:1152.6px;top:745.2500000000001px" width="17" height="11" viewBox="0 0 17 11"><path d="M1.7 1.4L8.3 8.4L14.9 1.4" fill="none" stroke="#7a7a7a" stroke-width="2.7"/></svg>
<svg style="position:absolute;left:7px;top:779.7000000000002px" width="20" height="20" viewBox="0 0 20 20"><circle cx="10.2" cy="10.05" r="9.05" fill="#fff" stroke="#7d8890" stroke-width="1.7"/><path d="M5.3 8.7V11.5M7.8 6.3V13.7" stroke="#aab3b9" stroke-width="1.4"/><path d="M10.3 4.6V15.4" stroke="#eab12e" stroke-width="1.6"/><path d="M12.6 6.3V13.8" stroke="#edbb4e" stroke-width="1.5"/><path d="M14.8 8.7V11.5" stroke="#f0c66a" stroke-width="1.8"/></svg>
<div class="t" style="left:36px;top:784.62px;font-size:12px;line-height:12px;color:#262626;font-weight:400;letter-spacing:-0.15px;-webkit-text-stroke:0.25px #262626;">Queue Listener</div>
<div class="t" style="left:291.5px;top:784.62px;font-size:12px;line-height:12px;color:#262626;font-weight:400;-webkit-text-stroke:0.25px #262626;">409</div>
<div class="t" style="left:576.5px;top:784.62px;font-size:12px;line-height:12px;color:#262626;font-weight:400;letter-spacing:-0.15px;-webkit-text-stroke:0.25px #262626;">Queue Listener</div>
<div class="t" style="left:675.5px;top:784.62px;font-size:12px;line-height:12px;color:#262626;font-weight:400;-webkit-text-stroke:0.25px #262626;">-</div>
<div class="t" style="left:826px;top:784.62px;font-size:12px;line-height:12px;color:#262626;font-weight:400;letter-spacing:0.12px;-webkit-text-stroke:0.25px #262626;">Activated</div>
<div class="t" style="left:927px;top:784.62px;font-size:12px;line-height:12px;color:#262626;font-weight:400;-webkit-text-stroke:0.25px #262626;">-</div>
<svg style="position:absolute;left:1098.0px;top:780.7000000000002px" width="18" height="18" viewBox="0 0 18 18"><circle cx="9" cy="9" r="7.6" fill="none" stroke="#2dbb6e" stroke-width="1.5"/><path d="M5.6 9.3L7.9 11.5L12.5 6.5" fill="none" stroke="#2dbb6e" stroke-width="1.5"/></svg>
<svg style="position:absolute;left:1152.6px;top:783.7000000000002px" width="17" height="11" viewBox="0 0 17 11"><path d="M1.7 1.4L8.3 8.4L14.9 1.4" fill="none" stroke="#7a7a7a" stroke-width="2.7"/></svg>
<svg style="position:absolute;left:7px;top:817.9000000000002px" width="20" height="22" viewBox="0 0 20 22"><circle cx="10.35" cy="10" r="9.2" fill="#2dbf73"/><path d="M8.5 6.6L14 9.9L8.5 13.2Z" fill="#fff" stroke="#fff" stroke-width="0.5" stroke-linejoin="round"/><circle cx="15.8" cy="15.8" r="3.3" fill="#7b848c"/><circle cx="15.8" cy="15.8" r="1.8" fill="#a3abb1"/><path d="M15.8 14.7V15.9H16.8" fill="none" stroke="#7b848c" stroke-width="0.6"/></svg>
<div class="t" style="left:36px;top:823.07px;font-size:12px;line-height:12px;color:#262626;font-weight:400;letter-spacing:-0.05px;-webkit-text-stroke:0.25px #262626;">Recurring</div>
<div class="t" style="left:291.5px;top:823.07px;font-size:12px;line-height:12px;color:#262626;font-weight:400;-webkit-text-stroke:0.25px #262626;">458</div>
<div class="t" style="left:576.5px;top:823.07px;font-size:12px;line-height:12px;color:#262626;font-weight:400;letter-spacing:-0.05px;-webkit-text-stroke:0.25px #262626;">Recurring</div>
<div class="t" style="left:675.5px;top:823.07px;font-size:12px;line-height:12px;color:#262626;font-weight:400;letter-spacing:0.18px;-webkit-text-stroke:0.25px #262626;">26/08/2020 14:49:34</div>
<div class="t" style="left:826px;top:823.07px;font-size:12px;line-height:12px;color:#262626;font-weight:400;-webkit-text-stroke:0.25px #262626;">Playing</div>
<div class="t" style="left:927px;top:823.07px;font-size:12px;line-height:12px;color:#262626;font-weight:400;letter-spacing:0.18px;-webkit-text-stroke:0.25px #262626;">26/08/2020 14:50:34</div>
<svg style="position:absolute;left:1098.2px;top:819.1500000000002px" width="18" height="18" viewBox="0 0 18 18"><circle cx="9" cy="9" r="7.85" fill="none" stroke="#8d989e" stroke-width="1.6"/><path d="M5.5 5.5L12.5 12.5M12.5 5.5L5.5 12.5" stroke="#8d989e" stroke-width="1.6"/></svg>
<svg style="position:absolute;left:1152.6px;top:822.1500000000002px" width="17" height="11" viewBox="0 0 17 11"><path d="M1.7 1.4L8.3 8.4L14.9 1.4" fill="none" stroke="#7a7a7a" stroke-width="2.7"/></svg>
<svg style="position:absolute;left:7px;top:856.3500000000003px" width="20" height="22" viewBox="0 0 20 22"><circle cx="10.35" cy="10" r="9.2" fill="#2dbf73"/><path d="M8.5 6.6L14 9.9L8.5 13.2Z" fill="#fff" stroke="#fff" stroke-width="0.5" stroke-linejoin="round"/><circle cx="15.8" cy="15.8" r="3.3" fill="#7b848c"/><circle cx="15.8" cy="15.8" r="1.8" fill="#a3abb1"/><path d="M15.8 14.7V15.9H16.8" fill="none" stroke="#7b848c" stroke-width="0.6"/></svg>
<div class="t" style="left:36px;top:861.52px;font-size:12px;line-height:12px;color:#262626;font-weight:400;letter-spacing:-0.05px;-webkit-text-stroke:0.25px #262626;">Recurring</div>
<div class="t" style="left:291.5px;top:861.52px;font-size:12px;line-height:12px;color:#262626;font-weight:400;-webkit-text-stroke:0.25px #262626;">467</div>
<div class="t" style="left:576.5px;top:861.52px;font-size:12px;line-height:12px;color:#262626;font-weight:400;letter-spacing:-0.05px;-webkit-text-stroke:0.25px #262626;">Recurring</div>
<div class="t" style="left:675.5px;top:861.52px;font-size:12px;line-height:12px;color:#262626;font-weight:400;letter-spacing:0.18px;-webkit-text-stroke:0.25px #262626;">31/07/2020 10:15:00</div>
<div class="t" style="left:826px;top:861.52px;font-size:12px;line-height:12px;color:#262626;font-weight:400;-webkit-text-stroke:0.25px #262626;">Test Completed</div>
<div class="t" style="left:927px;top:861.52px;font-size:12px;line-height:12px;color:#262626;font-weight:400;letter-spacing:0.18px;-webkit-text-stroke:0.25px #262626;">04/09/2020 10:15:00</div>
<svg style="position:absolute;left:1098.2px;top:857.6000000000003px" width="18" height="18" viewBox="0 0 18 18"><circle cx="9" cy="9" r="7.85" fill="none" stroke="#8d989e" stroke-width="1.6"/><path d="M5.5 5.5L12.5 12.5M12.5 5.5L5.5 12.5" stroke="#8d989e" stroke-width="1.6"/></svg>
<svg style="position:absolute;left:1152.6px;top:860.6000000000003px" width="17" height="11" viewBox="0 0 17 11"><path d="M1.7 1.4L8.3 8.4L14.9 1.4" fill="none" stroke="#7a7a7a" stroke-width="2.7"/></svg>
<svg style="position:absolute;left:7px;top:895.0500000000003px" width="20" height="20" viewBox="0 0 20 20"><circle cx="10.2" cy="10.05" r="9.05" fill="#fff" stroke="#7d8890" stroke-width="1.7"/><path d="M5.3 8.7V11.5M7.8 6.3V13.7" stroke="#aab3b9" stroke-width="1.4"/><path d="M10.3 4.6V15.4" stroke="#eab12e" stroke-width="1.6"/><path d="M12.6 6.3V13.8" stroke="#edbb4e" stroke-width="1.5"/><path d="M14.8 8.7V11.5" stroke="#f0c66a" stroke-width="1.8"/></svg>
<div class="t" style="left:36px;top:899.97px;font-size:12px;line-height:12px;color:#262626;font-weight:400;letter-spacing:-0.15px;-webkit-text-stroke:0.25px #262626;">Queue Listener</div>
<div class="t" style="left:291.5px;top:899.97px;font-size:12px;line-height:12px;color:#262626;font-weight:400;-webkit-text-stroke:0.25px #262626;">484</div>
<div class="t" style="left:576.5px;top:899.97px;font-size:12px;line-height:12px;color:#262626;font-weight:400;letter-spacing:-0.15px;-webkit-text-stroke:0.25px #262626;">Queue Listener</div>
<div class="t" style="left:675.5px;top:899.97px;font-size:12px;line-height:12px;color:#262626;font-weight:400;-webkit-text-stroke:0.25px #262626;">-</div>
<div class="t" style="left:826px;top:899.97px;font-size:12px;line-height:12px;color:#262626;font-weight:400;letter-spacing:0.12px;-webkit-text-stroke:0.25px #262626;">Activated</div>
<div class="t" style="left:927px;top:899.97px;font-size:12px;line-height:12px;color:#262626;font-weight:400;-webkit-text-stroke:0.25px #262626;">-</div>
<svg style="position:absolute;left:1098.0px;top:896.0500000000003px" width="18" height="18" viewBox="0 0 18 18"><circle cx="9" cy="9" r="7.6" fill="none" stroke="#2dbb6e" stroke-width="1.5"/><path d="M5.6 9.3L7.9 11.5L12.5 6.5" fill="none" stroke="#2dbb6e" stroke-width="1.5"/></svg>
<svg style="position:absolute;left:1152.6px;top:899.0500000000003px" width="17" height="11" viewBox="0 0 17 11"><path d="M1.7 1.4L8.3 8.4L14.9 1.4" fill="none" stroke="#7a7a7a" stroke-width="2.7"/></svg>
<div style="position:absolute;left:1183px;top:229px;width:10px;height:679px;background:#f8f8f8"></div>
<div style="position:absolute;left:1184px;top:230px;width:8px;height:321px;background:#ebebeb"></div>
<div style="position:absolute;left:1195px;top:120px;width:1px;height:788px;background:#dcdcdc"></div>
<div style="position:absolute;left:1196px;top:120px;width:1px;height:788px;background:#d0d0d0"></div>
<div style="position:absolute;left:1196px;top:0px;width:1px;height:120px;background:#c2c7c9"></div>
<div style="position:absolute;left:0px;top:907px;width:1195px;height:1px;background:#dcdcdc"></div>
</body></html>
